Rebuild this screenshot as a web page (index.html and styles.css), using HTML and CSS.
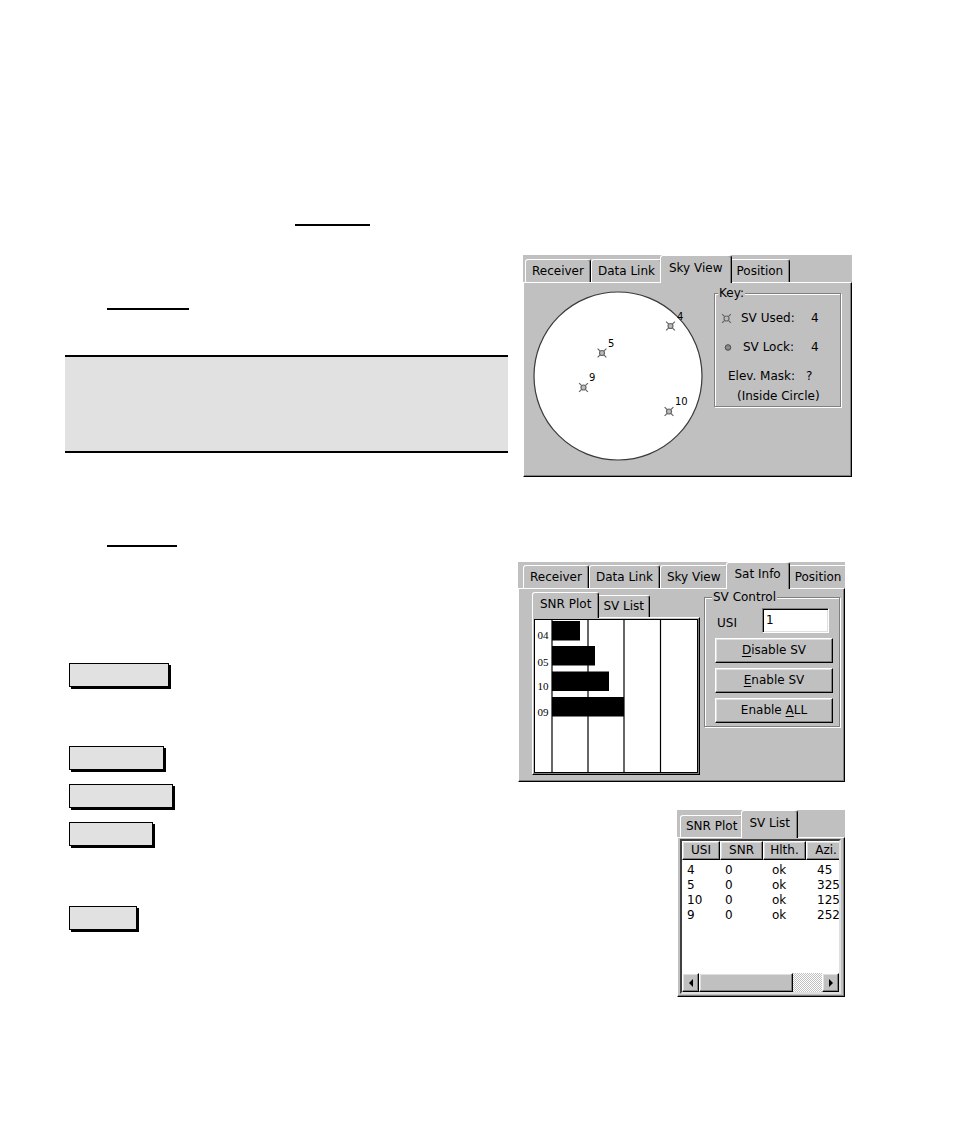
FILE: index.html
```html
<!DOCTYPE html>
<html lang="en">
<head>
<meta charset="utf-8">
<title>Sky View / Sat Info</title>
<link rel="stylesheet" href="styles.css">
</head>
<body>
<div class="page">
  <div class="col-left">
    <div class="rule r1"></div>
    <div class="rule r2"></div>
    <div class="callout"></div>
    <div class="rule r3"></div>
    <div class="keycap kc1"></div>
    <div class="keycap kc2"></div>
    <div class="keycap kc3"></div>
    <div class="keycap kc4"></div>
    <div class="keycap kc5"></div>
  </div>

  <div class="col-right">
    <!-- Sky View screenshot -->
    <div class="shot shot-sky">
      <div class="tabs tabs-sky">
        <div class="tab">Receiver</div>
        <div class="tab">Data Link</div>
        <div class="tab sel">Sky View</div>
        <div class="tab">Position</div>
      </div>
      <div class="tbody sky-body">
        <svg class="skyplot" width="190" height="190" viewBox="0 0 190 190">
          <defs>
            <g id="sv" fill="none" stroke="#666" stroke-width="1.2">
              <circle r="2.5" fill="#bbb"/>
              <path d="M-4.4 -4.4L-1.8 -1.8M4.4 -4.4L1.8 -1.8M-4.4 4.4L-1.8 1.8M4.4 4.4L1.8 1.8"/>
            </g>
          </defs>
          <circle cx="94" cy="93" r="84" fill="#fff" stroke="#3a3a3a" stroke-width="1.2"/>
          <use href="#sv" x="146.5" y="43"/>
          <text class="svlbl" x="153" y="37">4</text>
          <use href="#sv" x="78" y="70"/>
          <text class="svlbl" x="84" y="64">5</text>
          <use href="#sv" x="59.5" y="104.5"/>
          <text class="svlbl" x="65" y="98">9</text>
          <use href="#sv" x="145" y="128.5"/>
          <text class="svlbl" x="151" y="122">10</text>
        </svg>
        <fieldset class="group key-group">
          <legend>Key:</legend>
          <div class="krow k-used">
            <svg class="kicon" width="11" height="11" viewBox="0 0 11 11"><use href="#sv" x="5.5" y="5.5"/></svg>
            <span class="klabel">SV Used:</span><span class="kval">4</span>
          </div>
          <div class="krow k-lock">
            <svg class="kicon" width="11" height="11" viewBox="0 0 11 11"><circle cx="7" cy="5.5" r="2.8" fill="#8a8a8a" stroke="#4a4a4a" stroke-width="1"/></svg>
            <span class="klabel">SV Lock:</span><span class="kval">4</span>
          </div>
          <div class="krow k-mask">
            <span class="klabel">Elev. Mask:</span><span class="kval">?</span>
          </div>
          <div class="krow k-note">(Inside Circle)</div>
        </fieldset>
      </div>
    </div>

    <!-- Sat Info screenshot -->
    <div class="shot shot-sat">
      <div class="tabs tabs-sat">
        <div class="tab">Receiver</div>
        <div class="tab">Data Link</div>
        <div class="tab">Sky View</div>
        <div class="tab sel">Sat Info</div>
        <div class="tab">Position</div>
      </div>
      <div class="tbody sat-body">
        <div class="subctl">
          <div class="tabs subtabs">
            <div class="tab sel">SNR Plot</div>
            <div class="tab">SV List</div>
          </div>
          <div class="tbody sub-body">
            <div class="plot">
              <svg width="162" height="152" viewBox="0 0 162 152">
                <g stroke="#000" stroke-width="1.2">
                  <line x1="17" y1="0" x2="17" y2="152"/>
                  <line x1="53" y1="0" x2="53" y2="152"/>
                  <line x1="89" y1="0" x2="89" y2="152"/>
                  <line x1="125.5" y1="0" x2="125.5" y2="152"/>
                </g>
                <g fill="#000">
                  <rect x="17" y="1" width="28" height="19.5"/>
                  <rect x="17" y="26" width="43" height="19.5"/>
                  <rect x="17" y="51.5" width="57" height="19.5"/>
                  <rect x="17" y="77" width="72" height="19.5"/>
                </g>
                <g class="snrlbl">
                  <text x="2.5" y="19">04</text>
                  <text x="2.5" y="45.5">05</text>
                  <text x="2.5" y="70">10</text>
                  <text x="2.5" y="95.5">09</text>
                </g>
              </svg>
            </div>
          </div>
        </div>
        <fieldset class="group ctl-group">
          <legend>SV Control</legend>
          <div class="usi-row">
            <span class="usi-lbl">USI</span>
            <div class="edit">1</div>
          </div>
          <div class="btn raised"><u>D</u>isable SV</div>
          <div class="btn raised"><u>E</u>nable SV</div>
          <div class="btn raised">Enable <u>A</u>LL</div>
        </fieldset>
      </div>
    </div>

    <!-- SV List screenshot -->
    <div class="shot shot-list">
      <div class="tabs tabs-list">
        <div class="tab">SNR Plot</div>
        <div class="tab sel">SV List</div>
      </div>
      <div class="tbody list-body">
        <div class="listbox">
          <div class="lv-head">
            <div class="hc raised c1">USI</div>
            <div class="hc raised c2">SNR</div>
            <div class="hc raised c3">Hlth.</div>
            <div class="hc raised c4">Azi.</div>
          </div>
          <div class="lv-rows">
            <div class="lv-row"><span>4</span><span>0</span><span>ok</span><span>45</span></div>
            <div class="lv-row"><span>5</span><span>0</span><span>ok</span><span>325</span></div>
            <div class="lv-row"><span>10</span><span>0</span><span>ok</span><span>125</span></div>
            <div class="lv-row"><span>9</span><span>0</span><span>ok</span><span>252</span></div>
          </div>
          <div class="hscroll">
            <div class="sb-btn raised"><span class="arr-l"></span></div>
            <div class="sb-thumb raised"></div>
            <div class="sb-track"></div>
            <div class="sb-btn raised"><span class="arr-r"></span></div>
          </div>
        </div>
      </div>
    </div>
  </div>
</div>
</body>
</html>
```

FILE: styles.css
```css
* { box-sizing: border-box; }

html, body {
  margin: 0;
  background: #fff;
}

body {
  font-family: "DejaVu Sans", "Liberation Sans", sans-serif;
  color: #000;
}

.page {
  display: flex;
  align-items: flex-start;
  width: 954px;
  height: 1145px;
  padding-left: 65px;
  overflow: hidden;
}

/* ---------- left document column ---------- */
.col-left {
  width: 445px;
  display: flex;
  flex-direction: column;
  align-items: flex-start;
}

.rule {
  height: 2px;
  background: #000;
}
.r1 { margin-top: 224px; margin-left: 230px; width: 75px; }
.r2 { margin-top: 82px; margin-left: 42px; width: 82px; }
.r3 { margin-top: 92px; margin-left: 42px; width: 70px; }

.callout {
  margin-top: 45px;
  width: 443px;
  height: 98px;
  background: #e1e1e1;
  border-top: 2px solid #000;
  border-bottom: 2px solid #000;
}

.keycap {
  margin-left: 4px;
  height: 24px;
  border: 1px solid #000;
  background: #e1e1e1;
  box-shadow: 2px 2px 0 #000;
}
.kc1 { margin-top: 116px; width: 100px; }
.kc2 { margin-top: 59px; width: 95px; }
.kc3 { margin-top: 14px; width: 104px; }
.kc4 { margin-top: 14px; width: 84px; }
.kc5 { margin-top: 60px; width: 68px; }

/* ---------- right column: device screenshots ---------- */
.col-right {
  margin-left: 8px;
  display: flex;
  flex-direction: column;
  align-items: flex-start;
}

.shot {
  background: #c0c0c0;
  font-size: 12px;
  line-height: 14px;
  display: flex;
  flex-direction: column;
  overflow: hidden;
}
.shot-sky { margin-top: 255px; margin-left: 5px; width: 329px; height: 222px; }
.shot-sat { margin-top: 85px; width: 327px; height: 220px; }
.shot-list { margin-top: 28px; margin-left: 159px; width: 168px; height: 187px; }

/* tabs */
.tabs {
  display: flex;
  align-items: flex-end;
  flex: none;
}
.tabs-sky { height: 27px; padding-left: 2px; }
.tabs-sat { height: 26px; padding-left: 5px; }
.subtabs { height: 25px; padding-left: 2px; }
.tabs-list { height: 27px; padding-left: 3px; }

.tab {
  box-sizing: content-box;
  height: 22px;
  line-height: 22px;
  padding: 0 5px;
  border: 1px solid;
  border-bottom: 0;
  border-color: #fff #000 #000 #fff;
  box-shadow: inset -1px 0 #808080;
  border-radius: 3px 3px 0 0;
  background: #c0c0c0;
  white-space: nowrap;
}
.tabs-sky .tab, .tabs-sat .tab { padding: 0 6px; }
.tab.sel {
  position: relative;
  z-index: 1;
  margin: 0 -2px -1px;
  padding: 0 7px 3px;
  height: 24px;
  line-height: 24px;
}
.tabs-sky .tab.sel, .tabs-sat .tab.sel { padding: 0 8px 3px; }
.tabs-sat .tab.sel { height: 23px; line-height: 23px; }
.subtabs .tab.sel { height: 22px; line-height: 22px; }
.subtabs .tab { height: 21px; line-height: 21px; }
.tabs-list .tab { height: 21px; line-height: 21px; }
.tabs-list .tab.sel { height: 24px; line-height: 24px; }

.tbody {
  flex: 1;
  min-height: 0;
  border: 1px solid;
  border-color: #fff #000 #000 #fff;
  box-shadow: inset -1px -1px #808080;
}

/* raised 3D look */
.raised {
  background: #c0c0c0;
  border: 1px solid;
  border-color: #fff #000 #000 #fff;
  box-shadow: inset -1px -1px #808080, inset 1px 1px #dfdfdf;
}

/* group boxes */
.group {
  margin: 0;
  padding: 0;
  min-width: 0;
  border: 1px solid #808080;
  box-shadow: inset 1px 1px #fff, 1px 1px #fff;
}
.group legend {
  padding: 0 1px;
  font-size: 12px;
  line-height: 14px;
  background: #c0c0c0;
}

/* ---------- sky view ---------- */
.sky-body {
  display: flex;
  align-items: flex-start;
}
.skyplot { display: block; flex: none; }
.svlbl {
  font-family: "DejaVu Sans", sans-serif;
  font-size: 10px;
  fill: #000;
}

.key-group {
  margin-top: 3px;
  width: 127px;
  padding-bottom: 3px;
}
.key-group legend { margin-left: 3px; }

.krow {
  display: flex;
  align-items: center;
  white-space: nowrap;
}
.k-used { margin-top: 4px; height: 28px; }
.k-lock { height: 30px; }
.k-mask { height: 27px; }
.k-note { height: 14px; padding-left: 22px; }

.kicon { display: block; flex: none; margin-left: 6px; }
.k-used .klabel { margin-left: 9px; width: 70px; }
.k-lock .klabel { margin-left: 11px; width: 68px; }
.k-mask .klabel { margin-left: 13px; width: 78px; }

/* ---------- sat info ---------- */
.sat-body {
  display: flex;
  align-items: flex-start;
}
.subctl {
  margin-left: 13px;
  margin-top: 3px;
  width: 168px;
  height: 183px;
  display: flex;
  flex-direction: column;
}
.sub-body { padding: 1px; }
.plot {
  width: 164px;
  height: 154px;
  border: 1px solid #000;
  background: #fff;
}
.plot svg { display: block; }
.snrlbl text {
  font-family: "Liberation Serif", serif;
  font-size: 11px;
  fill: #000;
}

.ctl-group {
  margin-left: 4px;
  margin-top: 1px;
  width: 136px;
  padding-bottom: 3px;
}
.ctl-group legend { margin-left: 7px; }

.usi-row {
  margin-top: 4px;
  height: 25px;
  display: flex;
  align-items: center;
}
.usi-lbl {
  margin-left: 12px;
  width: 45px;
  padding-top: 4px;
}
.edit {
  width: 67px;
  height: 25px;
  background: #fff;
  border: 1px solid;
  border-color: #808080 #fff #fff #808080;
  box-shadow: inset 1px 1px #000, inset -1px -1px #dfdfdf;
  padding: 4px 0 0 3px;
  line-height: 15px;
}

.btn {
  margin-top: 5px;
  margin-left: 10px;
  width: 118px;
  height: 25px;
  line-height: 23px;
  text-align: center;
}
.btn u { text-decoration: underline; text-underline-offset: 2px; }

/* ---------- SV list ---------- */
.list-body { padding: 1px 3px 2px 2px; }
.listbox {
  height: 100%;
  background: #fff;
  border: 2px solid;
  border-color: #404040 #e0e0e0 #e0e0e0 #404040;
  display: flex;
  flex-direction: column;
  overflow: hidden;
}
.lv-head {
  display: flex;
  flex: none;
  height: 19px;
}
.hc {
  flex: none;
  height: 19px;
  line-height: 17px;
  text-align: center;
  white-space: nowrap;
}
.c1 { width: 38px; }
.c2 { width: 43px; }
.c3 { width: 43px; }
.c4 { width: 40px; }

.lv-rows {
  flex: 1;
  padding-top: 3px;
}
.lv-row {
  display: grid;
  grid-template-columns: 38px 47px 45px 1fr;
  height: 15px;
  line-height: 15px;
  white-space: nowrap;
}
.lv-row span { padding-left: 5px; }

.hscroll {
  flex: none;
  height: 19px;
  display: flex;
  background: #c0c0c0;
}
.sb-btn {
  flex: none;
  width: 17px;
  display: flex;
  align-items: center;
  justify-content: center;
}
.sb-thumb { flex: none; width: 94px; }
.sb-track {
  flex: 1;
  background: repeating-conic-gradient(#fff 0 25%, #c0c0c0 0 50%) 0 0 / 2px 2px;
}
.arr-l, .arr-r {
  width: 0;
  height: 0;
  border-top: 4px solid transparent;
  border-bottom: 4px solid transparent;
}
.arr-l { border-right: 4px solid #000; }
.arr-r { border-left: 4px solid #000; }
```
